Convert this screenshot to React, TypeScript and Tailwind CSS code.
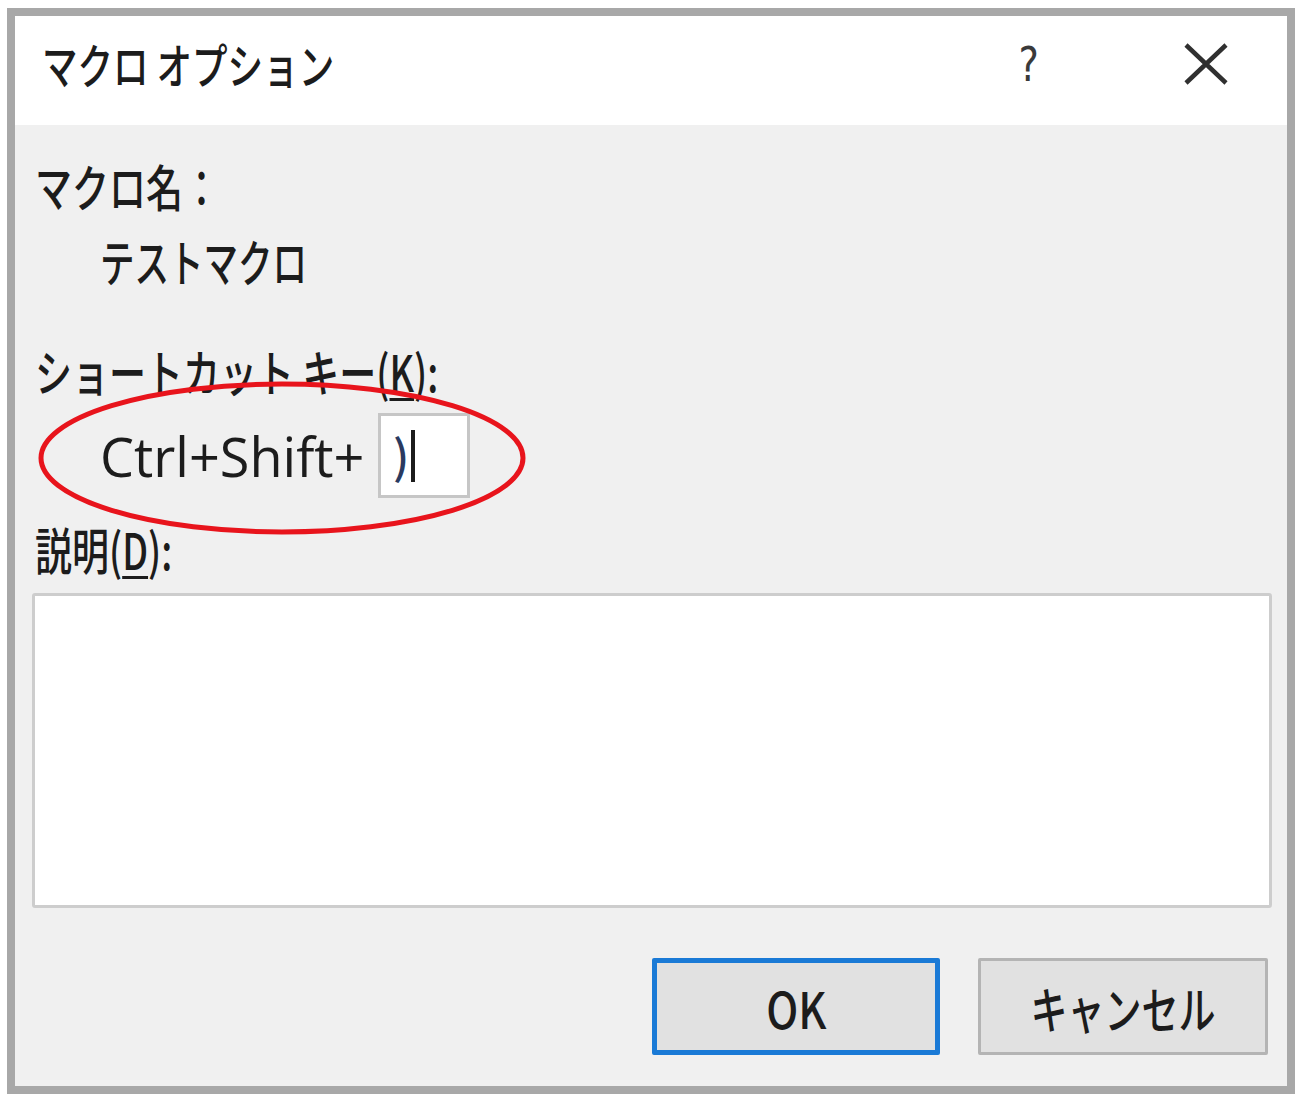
import React from "react";

const jp = { fontFamily: '"Noto Sans CJK JP", "Noto Sans", sans-serif' } as const;

function T({ children }: { children: React.ReactNode }) {
  return <span className="inline-block origin-left scale-x-[0.74] whitespace-nowrap">{children}</span>;
}

export default function App() {
  return (
    <div className="relative w-[1300px] h-[1098px] bg-white overflow-hidden font-medium" style={jp}>
      <div className="ml-[7px] mt-[8px] w-[1288px] h-[1086px] border-[8px] border-[#a8a8a8] flex flex-col bg-[#f0f0f0] text-[#1c1c1c]">
        {/* title bar */}
        <div className="h-[109px] bg-white flex items-center pl-[27px] pr-[58px] shrink-0">
          <div className="flex-1 text-[48px] leading-none -mt-[16px]">
            <T>マクロ オプション</T>
          </div>
          <div className="text-[48px] leading-none text-[#3a3a3a] -mt-[14px] mr-[142px]" style={{ fontFamily: '"DejaVu Sans", sans-serif' }}>
            <span className="inline-block scale-x-[0.8]">?</span>
          </div>
          <svg width="46" height="42" viewBox="0 0 46 42" className="-mt-[14px]">
            <path d="M3 2 L43 40 M43 2 L3 40" stroke="#303030" strokeWidth="4.5" fill="none" />
          </svg>
        </div>

        {/* body */}
        <div className="flex-1 flex flex-col pt-[30px] pl-[20px] pr-[14px]">
          <div className="h-[60px] flex items-center text-[50px] leading-none">
            <T>マクロ名：</T>
          </div>
          <div className="h-[60px] mt-[15px] pl-[65px] flex items-center text-[50px] leading-none">
            <span className="inline-block origin-left scale-x-[0.69] whitespace-nowrap">テストマクロ</span>
          </div>
          <div className="h-[60px] mt-[50px] flex items-center text-[50px] leading-none">
            <T>
              ショートカット キー(<span className="underline underline-offset-[6px] decoration-[3px]">K</span>):
            </T>
          </div>
          <div className="h-[85px] mt-[13px] pl-[65px] flex items-center">
            <div className="w-[278px] text-[54px] leading-none font-normal" style={{ fontFamily: '"Open Sans", sans-serif' }}>
              <span className="whitespace-nowrap">Ctrl+Shift+</span>
            </div>
            <div className="w-[92px] h-[85px] bg-white border-[3px] border-[#c6c6c6] flex items-center pl-[12px]">
              <span className="text-[46px] leading-none text-[#2a3a60] -mt-[4px]">)</span>
              <span className="w-[4px] h-[52px] bg-[#1c1c1c] ml-[2px]" />
            </div>
          </div>
          <div className="h-[60px] mt-[20px] flex items-center text-[50px] leading-none">
            <T>
              説明(<span className="underline underline-offset-[6px] decoration-[3px]">D</span>):
            </T>
          </div>
          <div className="-ml-[3px] mr-[1px] mt-[15px] h-[315px] bg-white border-[3px] border-[#cdcdcd] rounded-[3px]" />
          <div className="mt-[50px] flex justify-end gap-[38px] pr-[5px]">
            <button className="w-[288px] h-[97px] bg-[#e1e1e1] border-[5px] border-[#1a7ad6] rounded-[2px] flex items-center justify-center text-[50px] leading-none text-[#1c1c1c]">
              <span className="inline-block scale-x-[0.85]">OK</span>
            </button>
            <button className="w-[290px] h-[97px] bg-[#e1e1e1] border-[3px] border-[#b4b4b4] rounded-[2px] flex items-center justify-center text-[50px] leading-none text-[#1c1c1c]">
              <span className="inline-block scale-x-[0.74]">キャンセル</span>
            </button>
          </div>
        </div>
      </div>

      {/* red annotation ellipse */}
      <svg className="absolute left-0 top-0 pointer-events-none" width="1300" height="1098">
        <ellipse cx="282" cy="458" rx="241" ry="74" fill="none" stroke="#e8141c" strokeWidth="5" />
      </svg>
    </div>
  );
}
